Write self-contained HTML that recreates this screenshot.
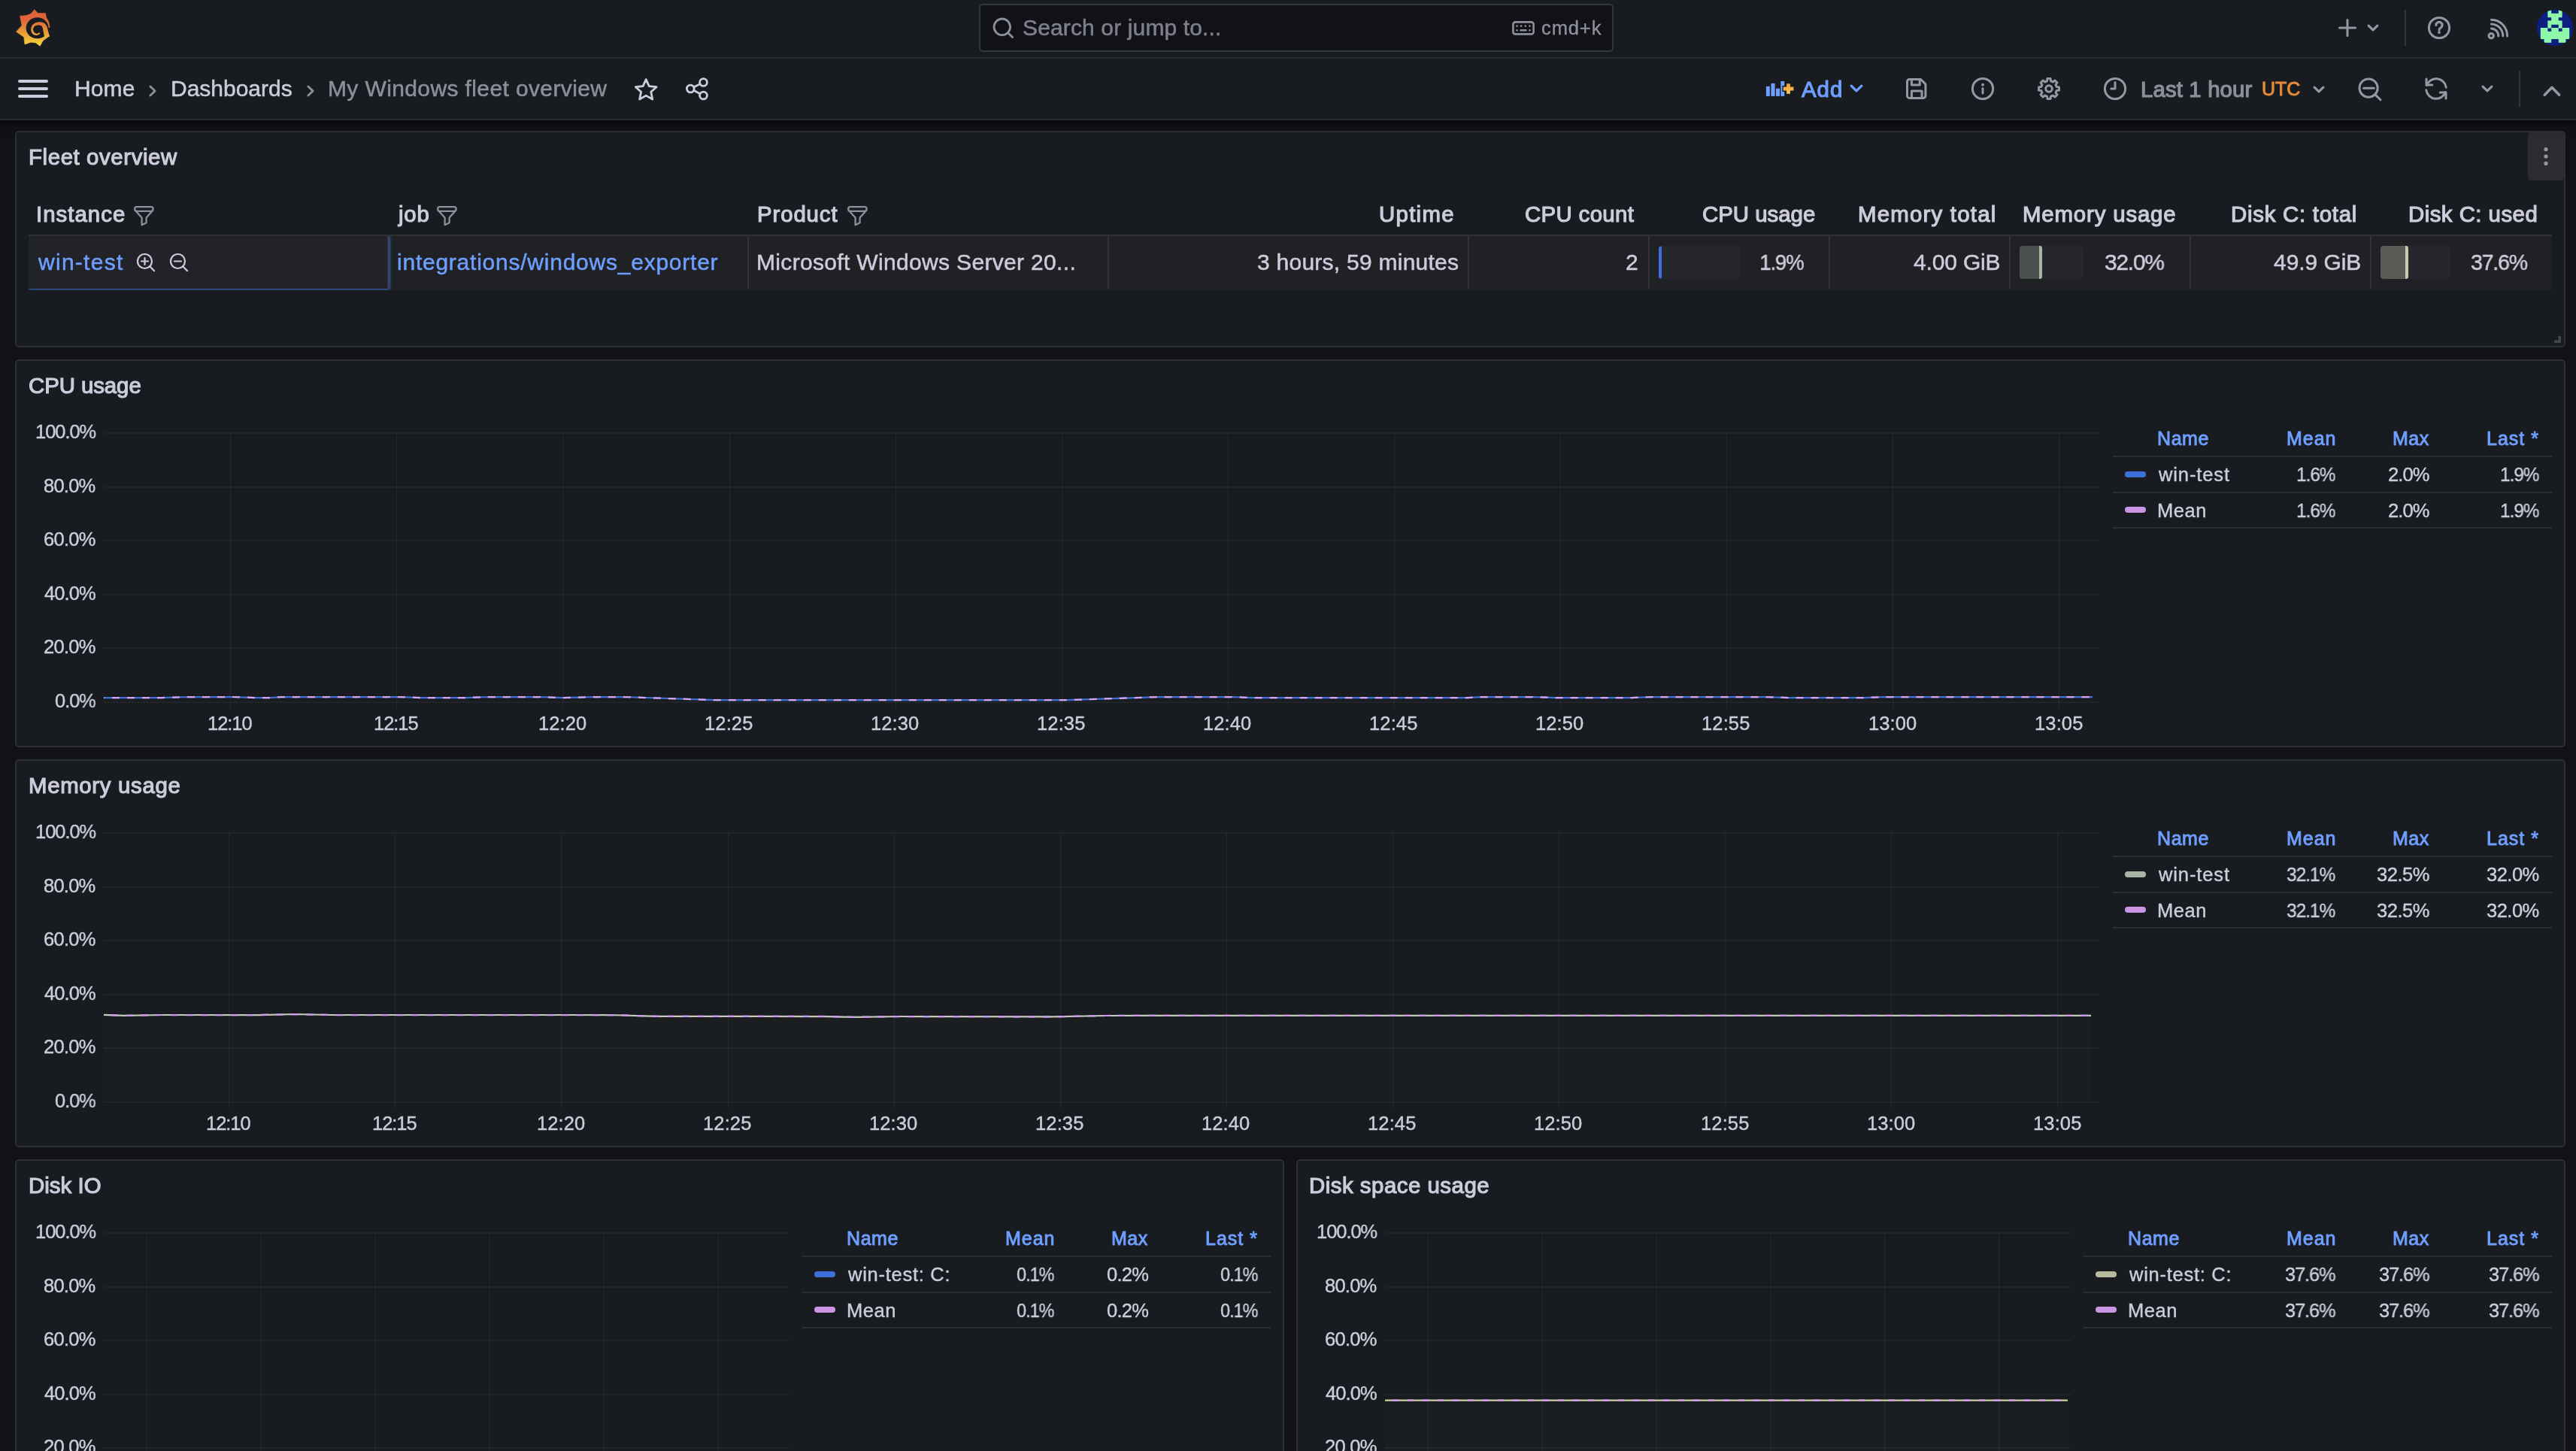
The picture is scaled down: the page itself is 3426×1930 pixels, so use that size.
<!DOCTYPE html>
<html lang="en"><head><meta charset="utf-8"><meta name="viewport" content="width=3426"><title>My Windows fleet overview - Dashboards - Grafana</title>
<style>
*{box-sizing:border-box}
html,body{margin:0;padding:0}
body{width:3426px;height:1930px;overflow:hidden;background:#111217;font-family:"Liberation Sans",sans-serif;color:#ccccdc;position:relative}
.t{position:absolute;white-space:pre;margin:0;font-weight:400;text-decoration:none;display:block}
.t{-webkit-text-stroke:0.5px currentColor;will-change:transform}
.t.m{-webkit-text-stroke:1.15px currentColor}
.t.s{-webkit-text-stroke:0.42px currentColor}
.t.m.s{-webkit-text-stroke:0.9px currentColor}
.ic{position:absolute;display:block;overflow:visible}
.topbar{position:absolute;left:0;top:0;width:3426px;height:78px;background:#181b1f;border-bottom:2px solid #2c2e34;z-index:4}
.toolbar{position:absolute;left:0;top:0;width:3426px;height:160px;background:#181b1f;border-bottom:2px solid #2c2e34;box-shadow:0 1px 13px 1px rgba(0,0,0,0.85);z-index:3}
.search{position:absolute;background:#111217;border:2px solid #34363d;border-radius:5px}
.vdiv{position:absolute;width:2px;background:#34363d}
.canvas{position:absolute;left:0;top:0;width:3426px;height:1930px;z-index:1}
.panel{position:absolute;background:#181b1f;border:2px solid #2d2f35;border-radius:5px}
.panel h2{font-weight:400}
.pmenu{position:absolute;background:#2a2c32;border-radius:4px}
.thead{position:absolute;border-bottom:2px solid #2f3136}
.trow{position:absolute;overflow:hidden;background:#1f2125}
.cell{position:absolute;border-right:2px solid #303237}
.cell.last{border-right:none}
.cell.hov{background:#212328;box-shadow:0 0 4px 0.5px #3d71d9;border-right-color:#36383d;z-index:1}
.z2{z-index:2}
.gtrack{position:absolute;background:#25272c;border-radius:4px;overflow:hidden}
.gfill{position:absolute;left:0;top:0;height:100%}
.gedge{position:absolute;top:0;width:4px;height:100%;border-radius:0 3px 3px 0}
.legend{position:absolute}
.lline{position:absolute;left:0;width:100%;height:2px;background:#2c2e34}
.lmark{position:absolute;width:28px;height:8px;border-radius:4px}
</style></head>
<body>
<header class="topbar">
<svg class="ic" style="left:10.00px;top:5.00px" width="70" height="65" viewBox="0 0 1563 1451" ><defs><linearGradient id="lg" x1="0" y1="180" x2="0" y2="1250" gradientUnits="userSpaceOnUse"><stop offset="0" stop-color="#e05f3a"/><stop offset="0.28" stop-color="#e0663a"/><stop offset="0.62" stop-color="#e89a36"/><stop offset="1" stop-color="#f8d63d"/></linearGradient></defs><path d="M800 172 L903 278 L1130 280 L1152 400 L1224 535 L1252 690 L1200 745 L1186 862 L1246 960 L1058 1092 L965 1256 L835 1160 L690 1146 L512 1206 L484 990 L256 830 L424 640 L366 360 L560 348 L692 296Z" fill="url(#lg)" stroke="url(#lg)" stroke-width="10" stroke-linejoin="round"/><ellipse cx="885" cy="722" rx="335" ry="312" fill="#181b1f"/><path d="M1251 971 L1248 961 L1244 948 L1240 933 L1235 916 L1230 897 L1224 878 L1219 859 L1214 840 L1209 823 L1205 808 L1202 796 L1199 783 L1196 771 L1193 758 L1191 744 L1188 731 L1184 717 L1179 702 L1174 687 L1168 673 L1161 661 L1155 650 L1148 639 L1140 627 L1131 615 L1121 603 L1109 592 L1096 581 L1082 571 L1067 563 L1051 556 L1035 551 L1018 547 L1001 545 L984 543 L967 542 L950 541 L932 542 L915 544 L899 546 L883 550 L866 554 L850 560 L833 566 L817 573 L801 581 L785 590 L771 600 L757 611 L744 624 L733 638 L724 654 L717 670 L711 686 L706 702 L702 719 L700 735 L698 751 L697 766 L697 780 L698 795 L701 809 L705 823 L710 836 L716 848 L722 860 L729 871 L737 881 L744 891 L753 899 L762 907 L773 914 L783 920 L794 925 L805 929 L816 932 L827 934 L838 936 L849 936 L860 936 L871 934 L882 931 L892 926 L902 921 L910 915 L919 910 L926 904 L932 899 L938 895 L942 893 L938 883 L933 884 L926 886 L918 888 L910 890 L901 892 L891 894 L882 895 L874 895 L867 895 L860 894 L854 892 L846 890 L838 888 L830 885 L822 882 L815 879 L808 875 L801 870 L796 866 L791 861 L786 855 L781 848 L777 840 L772 832 L768 824 L764 815 L762 806 L760 797 L759 788 L759 780 L760 770 L762 759 L764 747 L768 735 L772 722 L776 711 L782 700 L788 690 L794 682 L800 676 L807 671 L815 665 L825 660 L836 655 L849 650 L861 646 L874 643 L887 640 L900 639 L911 638 L922 637 L934 638 L946 639 L957 641 L969 643 L981 646 L991 650 L1000 653 L1008 657 L1013 661 L1017 665 L1020 669 L1023 673 L1025 678 L1028 684 L1031 691 L1034 699 L1038 708 L1041 717 L1044 727 L1047 734 L1049 742 L1051 750 L1052 760 L1054 771 L1056 783 L1058 796 L1061 811 L1064 826 L1067 842 L1071 858 L1075 876 L1079 895 L1083 914 L1088 933 L1092 952 L1096 970 L1100 985 L1103 999 L1105 1009Z" fill="url(#lg)"/><circle cx="908" cy="772" r="138" fill="#181b1f"/><path d="M745 790 C 750 870, 820 925, 900 900 C 925 892, 940 885, 945 878" fill="none" stroke="url(#lg)" stroke-width="42" stroke-linecap="round"/></svg>
<div class="search" style="left:1302px;top:5px;width:844px;height:64px">
<svg class="ic" style="left:14.00px;top:14.00px" width="32.6" height="32.6" viewBox="0 0 32.6 32.6" ><g fill="none" stroke="#8e8f9c" stroke-width="2.8" stroke-linecap="round" stroke-linejoin="round"><circle cx="14.80" cy="14.80" r="10.80"/><path d="M22.44 22.44 L28.60 28.60"/></g></svg>
<span id="t0" class="t" style="left:55.84px;top:15.10px;font-size:30px;line-height:30px;letter-spacing:0.137px;color:#7f808d">Search or jump to...</span>
<svg class="ic" style="left:707.00px;top:20.60px" width="30" height="18.8" viewBox="0 0 30 18.8" ><g fill="none" stroke="#8e8f9c" stroke-width="2.6" stroke-linecap="round" stroke-linejoin="round"><rect x="1.4" y="1.4" width="27.2" height="16" rx="3"/></g><g fill="#8e8f9c"><circle cx="6.5" cy="6.6" r="1.3"/><circle cx="12.1" cy="6.6" r="1.3"/><circle cx="17.8" cy="6.6" r="1.3"/><circle cx="23.4" cy="6.6" r="1.3"/><circle cx="6.5" cy="12.2" r="1.3"/><rect x="10.3" y="10.9" width="9.4" height="2.6" rx="1.3"/><circle cx="23.4" cy="12.2" r="1.3"/></g></svg>
<span id="t1" class="t s" style="left:746.12px;top:17.00px;font-size:25.5px;line-height:26px;letter-spacing:0.895px;color:#8e8f9c">cmd+k</span>
</div>
<svg class="ic" style="left:3108.00px;top:23.00px" width="28" height="28" viewBox="0 0 28 28" ><path fill="none" stroke="#9697a5" stroke-width="3" stroke-linecap="round" stroke-linejoin="round" d="M14 3.5 V24.5 M3.5 14 H24.5"/></svg>
<svg class="ic" style="left:3146.00px;top:30.00px" width="20" height="14" viewBox="0 0 20 14" ><path fill="none" stroke="#9697a5" stroke-width="3.2" stroke-linecap="round" stroke-linejoin="round" d="M4.1 4.1 L10 9.9 L15.9 4.1"/></svg>
<div class="vdiv" style="left:3198px;top:13px;height:48px"></div>
<svg class="ic" style="left:3224.00px;top:17.00px" width="40" height="40" viewBox="0 0 40 40" ><circle fill="none" stroke="#9697a5" stroke-width="3" stroke-linecap="round" stroke-linejoin="round" cx="20" cy="20" r="13.6"/><path fill="none" stroke="#9697a5" stroke-width="3.1" stroke-linecap="round" stroke-linejoin="round" d="M15.9 16.4 a4.1 4.1 0 1 1 6.2 3.5 c-1.5 0.9 -2.1 1.6 -2.1 3.1"/><circle cx="20" cy="26.1" r="1.9" fill="#9697a5"/></svg>
<svg class="ic" style="left:3305.00px;top:20.00px" width="36" height="36" viewBox="0 0 36 36" ><g fill="none" stroke="#9697a5" stroke-width="3" stroke-linecap="round" stroke-linejoin="round"><circle cx="8.20" cy="27.60" r="3.2"/><path d="M8.50 18.00 A9.60 9.60 0 0 1 17.80 27.90"/><path d="M8.50 12.00 A15.60 15.60 0 0 1 23.80 27.90"/><path d="M8.50 6.20 A21.40 21.40 0 0 1 29.60 27.90"/></g></svg>
<svg class="ic" style="left:3374.00px;top:12.80px" width="48" height="48" viewBox="0 0 48 48" ><defs><clipPath id="avc"><circle cx="24" cy="24" r="24"/></clipPath></defs><g clip-path="url(#avc)"><rect width="48" height="48" fill="#0d1f80"/><g fill="#8ef7a9"><rect x="14.40" y="0.00" width="4.80" height="5.40"/><rect x="28.80" y="0.00" width="4.80" height="5.40"/><rect x="14.40" y="4.80" width="19.20" height="5.40"/><rect x="19.20" y="9.60" width="9.60" height="5.40"/><rect x="14.40" y="14.40" width="19.20" height="5.40"/><rect x="14.40" y="19.20" width="4.80" height="5.40"/><rect x="28.80" y="19.20" width="4.80" height="5.40"/><rect x="4.80" y="24.00" width="9.60" height="5.40"/><rect x="19.20" y="24.00" width="9.60" height="5.40"/><rect x="33.60" y="24.00" width="9.60" height="5.40"/><rect x="4.80" y="28.80" width="38.40" height="5.40"/><rect x="4.80" y="33.60" width="38.40" height="5.40"/><rect x="9.60" y="38.40" width="9.60" height="5.40"/><rect x="28.80" y="38.40" width="9.60" height="5.40"/></g></g></svg>
</header>
<nav class="toolbar">
<svg class="ic" style="left:24.00px;top:106.00px" width="40" height="24" viewBox="0 0 40 24" ><g fill="#ccccdc"><rect x="0" y="0" width="40" height="4" rx="2"/><rect x="0" y="10" width="40" height="4" rx="2"/><rect x="0" y="20" width="40" height="4" rx="2"/></g></svg>
<a id="t2" class="t" style="left:98.74px;top:103.10px;font-size:30px;line-height:30px;letter-spacing:0.122px;color:#ccccdc">Home</a>
<svg class="ic" style="left:196.00px;top:111.00px" width="14" height="20" viewBox="0 0 14 20" ><path fill="none" stroke="#8e8f9c" stroke-width="2.8" stroke-linecap="round" stroke-linejoin="round" d="M3.9 3.9 L10.1 10 L3.9 16.1"/></svg>
<a id="t3" class="t" style="left:226.74px;top:103.10px;font-size:30px;line-height:30px;letter-spacing:-0.014px;color:#ccccdc">Dashboards</a>
<svg class="ic" style="left:406.00px;top:111.00px" width="14" height="20" viewBox="0 0 14 20" ><path fill="none" stroke="#8e8f9c" stroke-width="2.8" stroke-linecap="round" stroke-linejoin="round" d="M3.9 3.9 L10.1 10 L3.9 16.1"/></svg>
<a id="t4" class="t" style="left:435.74px;top:103.10px;font-size:30px;line-height:30px;letter-spacing:0.383px;color:#8e8f9c">My Windows fleet overview</a>
<svg class="ic" style="left:839.00px;top:99.00px" width="40" height="40" viewBox="0 0 40 40" ><path fill="none" stroke="#ccccdc" stroke-width="2.8" stroke-linecap="round" stroke-linejoin="round" d="M20.20 6.60 L24.26 15.62 L34.09 16.69 L26.76 23.33 L28.78 33.01 L20.20 28.10 L11.62 33.01 L13.64 23.33 L6.31 16.69 L16.14 15.62Z"/></svg>
<svg class="ic" style="left:907.00px;top:98.00px" width="40" height="40" viewBox="0 0 40 40" ><g fill="none" stroke="#ccccdc" stroke-width="2.8" stroke-linecap="round" stroke-linejoin="round"><circle cx="28.5" cy="11.5" r="4.9"/><circle cx="11.3" cy="20" r="4.9"/><circle cx="28.5" cy="29" r="4.9"/><path d="M15.7 17.8 L24.1 13.7 M15.7 22.2 L24.1 26.8"/></g></svg>
<svg class="ic" style="left:2348.00px;top:108.00px" width="40" height="21" viewBox="0 0 40 21" ><g fill="#6e9fff"><rect x="0.9" y="6.8" width="4.9" height="13.1"/><rect x="7.4" y="2.9" width="5.2" height="17"/><rect x="14" y="9.7" width="5" height="10.2"/><rect x="20.3" y="0" width="4.9" height="19.9"/></g><path d="M30.5 1.8 V18 M22.4 10 H38.6" stroke="#181b1f" stroke-width="8.2" fill="none"/><defs><linearGradient id="pg" x1="0" y1="0" x2="0" y2="1"><stop offset="0" stop-color="#f39b3c"/><stop offset="1" stop-color="#fbca4e"/></linearGradient></defs><path d="M28.1 3.2 h4.8 v4.4 h4.5 v4.8 h-4.5 v4.4 h-4.8 v-4.4 h-4.4 v-4.8 h4.4 z" fill="url(#pg)"/></svg>
<span id="t5" class="t m" style="left:2396.44px;top:103.50px;font-size:29.4px;line-height:29px;letter-spacing:0.969px;color:#6e9fff">Add</span>
<svg class="ic" style="left:2458.00px;top:110.00px" width="22" height="15" viewBox="0 0 22 15" ><path fill="none" stroke="#6e9fff" stroke-width="3.3" stroke-linecap="round" stroke-linejoin="round" d="M4.15 4.15 L11 10.85 L17.85 4.15"/></svg>
<svg class="ic" style="left:2535.00px;top:104.00px" width="28" height="28" viewBox="0 0 28 28" ><g fill="none" stroke="#9697a5" stroke-width="3" stroke-linecap="round" stroke-linejoin="round"><path d="M4.5 1.5 H19.5 L25.9 7.9 V23.4 a3 3 0 0 1 -3 3 H4.5 a3 3 0 0 1 -3 -3 V4.5 a3 3 0 0 1 3 -3 Z"/><path d="M7.4 1.6 V8.9 H18.2 V1.6"/><path d="M7.4 26.3 V17.1 H21 V26.3"/></g></svg>
<svg class="ic" style="left:2617.00px;top:98.00px" width="40" height="40" viewBox="0 0 40 40" ><circle fill="none" stroke="#9697a5" stroke-width="3" stroke-linecap="round" stroke-linejoin="round" cx="20" cy="20" r="13.6"/><circle cx="20" cy="14.8" r="2" fill="#9697a5"/><path fill="none" stroke="#9697a5" stroke-width="3" stroke-linecap="round" stroke-linejoin="round" d="M20 19.6 V26"/></svg>
<svg class="ic" style="left:2705.00px;top:98.00px" width="40" height="40" viewBox="0 0 40 40" ><path fill="none" stroke="#9697a5" stroke-width="3" stroke-linecap="round" stroke-linejoin="round" d="M17.87 6.57 L22.13 6.57 L22.53 9.81 L25.42 11.00 L27.99 9.00 L31.00 12.01 L29.00 14.58 L30.19 17.47 L33.43 17.87 L33.43 22.13 L30.19 22.53 L29.00 25.42 L31.00 27.99 L27.99 31.00 L25.42 29.00 L22.53 30.19 L22.13 33.43 L17.87 33.43 L17.47 30.19 L14.58 29.00 L12.01 31.00 L9.00 27.99 L11.00 25.42 L9.81 22.53 L6.57 22.13 L6.57 17.87 L9.81 17.47 L11.00 14.58 L9.00 12.01 L12.01 9.00 L14.58 11.00 L17.47 9.81Z"/><circle fill="none" stroke="#9697a5" stroke-width="3" stroke-linecap="round" stroke-linejoin="round" cx="20" cy="20" r="4.3"/></svg>
<svg class="ic" style="left:2793.00px;top:98.00px" width="40" height="40" viewBox="0 0 40 40" ><circle fill="none" stroke="#9697a5" stroke-width="3" stroke-linecap="round" stroke-linejoin="round" cx="20" cy="20" r="13.6"/><path fill="none" stroke="#9697a5" stroke-width="3" stroke-linecap="round" stroke-linejoin="round" d="M20 11.6 V20 H14.8"/></svg>
<span id="t6" class="t m" style="left:2847.09px;top:103.50px;font-size:29.4px;line-height:29px;letter-spacing:0.129px;color:#8e8f9c">Last 1 hour</span>
<span id="t7" class="t m s" style="left:3008.07px;top:105.60px;font-size:25px;line-height:25px;letter-spacing:0.000px;color:#e58b38">UTC</span>
<svg class="ic" style="left:3074.00px;top:111.50px" width="20" height="14" viewBox="0 0 20 14" ><path fill="none" stroke="#9697a5" stroke-width="3.2" stroke-linecap="round" stroke-linejoin="round" d="M4.1 4.1 L10 9.9 L15.9 4.1"/></svg>
<svg class="ic" style="left:3134.30px;top:100.50px" width="36" height="35.8" viewBox="0 0 36 35.8" ><g fill="none" stroke="#9697a5" stroke-width="3" stroke-linecap="round" stroke-linejoin="round"><circle cx="16.10" cy="16.10" r="12.10"/><path d="M24.71 24.60 L32.00 31.80"/><path d="M9.60 16.30 H23.30"/></g></svg>
<svg class="ic" style="left:3224.00px;top:103.00px" width="32" height="30" viewBox="0 0 32 30" ><g fill="none" stroke="#9697a5" stroke-width="3" stroke-linecap="round" stroke-linejoin="round"><path d="M3.5 10.45 A13.3 13.3 0 0 1 29.17 13.15"/><path d="M3 2 V9.9 H10.8"/><path d="M28.5 19.55 A13.3 13.3 0 0 1 2.83 16.85"/><path d="M29 28 V20.1 H21.2"/></g></svg>
<svg class="ic" style="left:3298.00px;top:111.00px" width="20" height="14" viewBox="0 0 20 14" ><path fill="none" stroke="#9697a5" stroke-width="3.2" stroke-linecap="round" stroke-linejoin="round" d="M4.1 4.1 L10 9.9 L15.9 4.1"/></svg>
<div class="vdiv" style="left:3350px;top:94px;height:48px"></div>
<svg class="ic" style="left:3380.00px;top:112.00px" width="28" height="18.5" viewBox="0 0 28 18.5" ><path fill="none" stroke="#9697a5" stroke-width="3.6" stroke-linecap="round" stroke-linejoin="round" d="M4.3 14.2 L14 4.3 L23.7 14.2"/></svg>
</nav>
<main class="canvas">
<section class="panel" id="p1" style="left:20px;top:174px;width:3392px;height:288px"><h2 id="t8" class="t m" style="left:16.09px;top:17.50px;font-size:29.4px;line-height:29px;letter-spacing:0.600px;color:#ccccdc">Fleet overview</h2>
<div class="pmenu" style="left:3340px;top:0px;width:48px;height:64px">
<svg class="ic" style="left:18px;top:19px" width="12" height="26" viewBox="0 0 12 26"><g fill="#9697a5"><circle cx="6" cy="3.6" r="2.6"/><circle cx="6" cy="13" r="2.6"/><circle cx="6" cy="22.4" r="2.6"/></g></svg>
</div>
<div class="thead" style="left:16px;top:64px;width:3356px;height:74px">
<span id="t9" class="t m" style="left:10.29px;top:29.50px;font-size:29.4px;line-height:29px;letter-spacing:1.018px;color:#ccccdc">Instance</span>
<svg class="ic" style="left:139.50px;top:33.60px" width="27" height="27" viewBox="0 0 27 27" ><g fill="none" stroke="#8e8f9c" stroke-width="2.3" stroke-linecap="round" stroke-linejoin="round"><rect x="1.2" y="1.2" width="24.4" height="5.6" rx="2.6"/><path d="M2.6 6.8 L10.6 15.6 V25.2 L16.6 22.2 V15.6 L24.4 6.8"/></g></svg>
<span id="t10" class="t m" style="left:491.97px;top:29.50px;font-size:29.4px;line-height:29px;letter-spacing:0.766px;color:#ccccdc">job</span>
<svg class="ic" style="left:543.00px;top:33.60px" width="27" height="27" viewBox="0 0 27 27" ><g fill="none" stroke="#8e8f9c" stroke-width="2.3" stroke-linecap="round" stroke-linejoin="round"><rect x="1.2" y="1.2" width="24.4" height="5.6" rx="2.6"/><path d="M2.6 6.8 L10.6 15.6 V25.2 L16.6 22.2 V15.6 L24.4 6.8"/></g></svg>
<span id="t11" class="t m" style="left:968.84px;top:29.50px;font-size:29.4px;line-height:29px;letter-spacing:0.884px;color:#ccccdc">Product</span>
<svg class="ic" style="left:1088.50px;top:33.60px" width="27" height="27" viewBox="0 0 27 27" ><g fill="none" stroke="#8e8f9c" stroke-width="2.3" stroke-linecap="round" stroke-linejoin="round"><rect x="1.2" y="1.2" width="24.4" height="5.6" rx="2.6"/><path d="M2.6 6.8 L10.6 15.6 V25.2 L16.6 22.2 V15.6 L24.4 6.8"/></g></svg>
<span id="t12" class="t m" style="left:1796.23px;top:29.50px;font-size:29.4px;line-height:29px;letter-spacing:1.290px;color:#ccccdc">Uptime</span>
<span id="t13" class="t m" style="left:1989.76px;top:29.50px;font-size:29.4px;line-height:29px;letter-spacing:0.349px;color:#ccccdc">CPU count</span>
<span id="t14" class="t m" style="left:2225.51px;top:29.50px;font-size:29.4px;line-height:29px;letter-spacing:-0.006px;color:#ccccdc">CPU usage</span>
<span id="t15" class="t m" style="left:2433.09px;top:29.50px;font-size:29.4px;line-height:29px;letter-spacing:1.224px;color:#ccccdc">Memory total</span>
<span id="t16" class="t m" style="left:2652.09px;top:29.50px;font-size:29.4px;line-height:29px;letter-spacing:0.843px;color:#ccccdc">Memory usage</span>
<span id="t17" class="t m" style="left:2929.09px;top:29.50px;font-size:29.4px;line-height:29px;letter-spacing:0.742px;color:#ccccdc">Disk C: total</span>
<span id="t18" class="t m" style="left:3164.59px;top:29.50px;font-size:29.4px;line-height:29px;letter-spacing:0.468px;color:#ccccdc">Disk C: used</span>
</div>
<div class="trow" style="left:16px;top:138px;width:3356px;height:72px">
<div class="cell hov" style="left:0.00px;top:0;width:479.00px;height:70px"></div>
<div class="cell" style="left:479.00px;top:0;width:479.00px;height:70px"></div>
<div class="cell" style="left:958.00px;top:0;width:479.00px;height:70px"></div>
<div class="cell" style="left:1437.00px;top:0;width:479.00px;height:70px"></div>
<div class="cell" style="left:1916.00px;top:0;width:240.00px;height:70px"></div>
<div class="cell" style="left:2156.00px;top:0;width:240.00px;height:70px"></div>
<div class="cell" style="left:2396.00px;top:0;width:240.00px;height:70px"></div>
<div class="cell" style="left:2636.00px;top:0;width:240.00px;height:70px"></div>
<div class="cell" style="left:2876.00px;top:0;width:240.00px;height:70px"></div>
<div class="cell last" style="left:3116.00px;top:0;width:240.00px;height:70px"></div>
<a id="t19" class="t z2" style="left:12.74px;top:20.10px;font-size:30px;line-height:30px;letter-spacing:1.273px;color:#6e9fff">win-test</a>
<svg class="ic z2" style="left:140.50px;top:19.90px" width="30.1" height="30.3" viewBox="0 0 30.1 30.3" ><g fill="none" stroke="#ccccdc" stroke-width="2.2" stroke-linecap="round" stroke-linejoin="round"><circle cx="13.50" cy="13.50" r="9.50"/><path d="M20.16 20.27 L26.10 26.30"/><path d="M9.00 13.50 H18.00"/><path d="M13.50 9.00 V18.00"/></g></svg>
<svg class="ic z2" style="left:184.50px;top:19.90px" width="30.1" height="30.3" viewBox="0 0 30.1 30.3" ><g fill="none" stroke="#ccccdc" stroke-width="2.2" stroke-linecap="round" stroke-linejoin="round"><circle cx="13.50" cy="13.50" r="9.50"/><path d="M20.16 20.27 L26.10 26.30"/><path d="M9.00 13.50 H18.00"/></g></svg>
<a id="t20" class="t" style="left:489.69px;top:20.10px;font-size:30px;line-height:30px;letter-spacing:0.763px;color:#6e9fff">integrations/windows_exporter</a>
<span id="t21" class="t" style="left:968.49px;top:20.10px;font-size:30px;line-height:30px;letter-spacing:0.333px;color:#ccccdc">Microsoft Windows Server 20...</span>
<span id="t22" class="t" style="left:1633.56px;top:20.10px;font-size:30px;line-height:30px;letter-spacing:0.254px;color:#ccccdc">3 hours, 59 minutes</span>
<span id="t23" class="t" style="left:2124.44px;top:20.10px;font-size:30px;line-height:30px;letter-spacing:0.000px;color:#ccccdc">2</span>
<span id="t24" class="t" style="left:2301.91px;top:20.10px;font-size:30px;line-height:30px;letter-spacing:-1.250px;color:#ccccdc;transform:scaleX(0.9196);transform-origin:2.29px 50%">1.9%</span>
<span id="t25" class="t" style="left:2506.51px;top:20.10px;font-size:30px;line-height:30px;letter-spacing:-0.160px;color:#ccccdc">4.00 GiB</span>
<span id="t26" class="t" style="left:2761.06px;top:20.10px;font-size:30px;line-height:30px;letter-spacing:-1.250px;color:#ccccdc;transform:scaleX(0.9967);transform-origin:1.14px 50%">32.0%</span>
<span id="t27" class="t" style="left:2986.01px;top:20.10px;font-size:30px;line-height:30px;letter-spacing:-0.053px;color:#ccccdc">49.9 GiB</span>
<span id="t28" class="t" style="left:3247.56px;top:20.10px;font-size:30px;line-height:30px;letter-spacing:-1.250px;color:#ccccdc;transform:scaleX(0.9485);transform-origin:1.14px 50%">37.6%</span>
<div class="gtrack" style="left:2168.00px;top:13.00px;width:108.00px;height:44px"><div class="gedge" style="left:0.00px;background:#3d71d9"></div></div>
<div class="gtrack" style="left:2648.00px;top:13.00px;width:85.00px;height:44px"><div class="gfill" style="width:27.00px;background:#4c5150"></div><div class="gedge" style="left:26.00px;background:#a9b5a7"></div></div>
<div class="gtrack" style="left:3128.00px;top:13.00px;width:93.00px;height:44px"><div class="gfill" style="width:34.00px;background:#595b55"></div><div class="gedge" style="left:33.00px;background:#c6cbac"></div></div>
</div>
<svg class="ic" style="left:3374.0px;top:269.5px" width="12" height="12" viewBox="0 0 12 12"><path d="M8.3 1 V8.3 H1" fill="none" stroke="#45474e" stroke-width="3.4"/></svg>
</section>
<section class="panel" id="p2" style="left:20px;top:478px;width:3392px;height:516px"><h2 id="t29" class="t m" style="left:16.01px;top:17.50px;font-size:29.4px;line-height:29px;letter-spacing:-0.069px;color:#ccccdc">CPU usage</h2>
<span id="t30" class="t s ax" style="left:24.66px;top:81.15px;font-size:25.5px;line-height:26px;letter-spacing:-1.050px;color:#ccccdc;transform:scaleX(0.9977);transform-origin:1.94px 50%">100.0%</span>
<span id="t31" class="t s ax" style="left:36.49px;top:152.65px;font-size:25.5px;line-height:26px;letter-spacing:-0.771px;color:#ccccdc">80.0%</span>
<span id="t32" class="t s ax" style="left:36.31px;top:224.15px;font-size:25.5px;line-height:26px;letter-spacing:-0.725px;color:#ccccdc">60.0%</span>
<span id="t33" class="t s ax" style="left:37.01px;top:295.65px;font-size:25.5px;line-height:26px;letter-spacing:-0.902px;color:#ccccdc">40.0%</span>
<span id="t34" class="t s ax" style="left:36.32px;top:367.15px;font-size:25.5px;line-height:26px;letter-spacing:-0.728px;color:#ccccdc">20.0%</span>
<span id="t35" class="t s ax" style="left:51.00px;top:438.65px;font-size:25.5px;line-height:26px;letter-spacing:-1.050px;color:#ccccdc;transform:scaleX(0.9950);transform-origin:1.00px 50%">0.0%</span>
<svg class="ic plot" style="left:114.00px;top:92.00px" width="2661.0" height="376.0" viewBox="0 0 2661.0 376.0"><g stroke="rgba(226,232,240,0.042)" stroke-width="2" fill="none"><path d="M2.0 4.00 H2656.5"/><path d="M2.0 76.00 H2656.5"/><path d="M2.0 147.00 H2656.5"/><path d="M2.0 219.00 H2656.5"/><path d="M2.0 290.00 H2656.5"/><path d="M2.0 362.00 H2656.5"/></g><g stroke="rgba(226,232,240,0.068)" stroke-width="1" fill="none" shape-rendering="crispEdges"><path d="M170.5 4.2 V370.2"/><path d="M391.5 4.2 V370.2"/><path d="M612.5 4.2 V370.2"/><path d="M834.5 4.2 V370.2"/><path d="M1055.5 4.2 V370.2"/><path d="M1276.5 4.2 V370.2"/><path d="M1497.5 4.2 V370.2"/><path d="M1718.5 4.2 V370.2"/><path d="M1939.5 4.2 V370.2"/><path d="M2160.5 4.2 V370.2"/><path d="M2381.5 4.2 V370.2"/><path d="M2602.5 4.2 V370.2"/></g><path d="M2.0 356.1 L79.0 356.1 L113.0 355.0 L173.0 355.0 L204.0 356.1 L222.0 356.1 L242.0 355.0 L396.0 355.0 L424.0 356.1 L483.0 356.1 L514.0 355.0 L581.0 355.0 L612.0 356.1 L658.0 355.0 L694.0 355.0 L815.0 359.2 L1283.0 359.2 L1405.0 355.0 L1503.0 355.0 L1528.0 356.1 L1816.0 356.1 L1834.0 355.0 L1904.0 355.0 L1932.0 356.1 L2034.0 356.1 L2061.0 355.0 L2209.0 355.0 L2244.0 356.1 L2344.0 356.1 L2369.0 355.0 L2647.0 355.0" fill="none" stroke="#3d71d9" stroke-width="2.25" stroke-linejoin="round"/><path d="M2.0 356.1 L79.0 356.1 L113.0 355.0 L173.0 355.0 L204.0 356.1 L222.0 356.1 L242.0 355.0 L396.0 355.0 L424.0 356.1 L483.0 356.1 L514.0 355.0 L581.0 355.0 L612.0 356.1 L658.0 355.0 L694.0 355.0 L815.0 359.2 L1283.0 359.2 L1405.0 355.0 L1503.0 355.0 L1528.0 356.1 L1816.0 356.1 L1834.0 355.0 L1904.0 355.0 L1932.0 356.1 L2034.0 356.1 L2061.0 355.0 L2209.0 355.0 L2244.0 356.1 L2344.0 356.1 L2369.0 355.0 L2647.0 355.0" fill="none" stroke="#dca4ec" stroke-width="2.25" stroke-dasharray="10 10" stroke-dashoffset="9" stroke-linejoin="round"/></svg>
<span id="t36" class="t s ax" style="left:254.01px;top:469.25px;font-size:25.5px;line-height:26px;letter-spacing:-1.050px;color:#ccccdc;transform:scaleX(0.9987);transform-origin:1.94px 50%">12:10</span>
<span id="t37" class="t s ax" style="left:475.10px;top:469.25px;font-size:25.5px;line-height:26px;letter-spacing:-1.049px;color:#ccccdc">12:15</span>
<span id="t38" class="t s ax" style="left:693.81px;top:469.25px;font-size:25.5px;line-height:26px;letter-spacing:0.119px;color:#ccccdc">12:20</span>
<span id="t39" class="t s ax" style="left:914.90px;top:469.25px;font-size:25.5px;line-height:26px;letter-spacing:0.138px;color:#ccccdc">12:25</span>
<span id="t40" class="t s ax" style="left:1135.99px;top:469.25px;font-size:25.5px;line-height:26px;letter-spacing:0.119px;color:#ccccdc">12:30</span>
<span id="t41" class="t s ax" style="left:1357.08px;top:469.25px;font-size:25.5px;line-height:26px;letter-spacing:0.138px;color:#ccccdc">12:35</span>
<span id="t42" class="t s ax" style="left:1578.17px;top:469.25px;font-size:25.5px;line-height:26px;letter-spacing:0.119px;color:#ccccdc">12:40</span>
<span id="t43" class="t s ax" style="left:1799.26px;top:469.25px;font-size:25.5px;line-height:26px;letter-spacing:0.138px;color:#ccccdc">12:45</span>
<span id="t44" class="t s ax" style="left:2020.35px;top:469.25px;font-size:25.5px;line-height:26px;letter-spacing:0.119px;color:#ccccdc">12:50</span>
<span id="t45" class="t s ax" style="left:2241.44px;top:469.25px;font-size:25.5px;line-height:26px;letter-spacing:0.138px;color:#ccccdc">12:55</span>
<span id="t46" class="t s ax" style="left:2462.53px;top:469.25px;font-size:25.5px;line-height:26px;letter-spacing:0.119px;color:#ccccdc">13:00</span>
<span id="t47" class="t s ax" style="left:2683.62px;top:469.25px;font-size:25.5px;line-height:26px;letter-spacing:0.138px;color:#ccccdc">13:05</span>
<div class="legend" style="left:2788.00px;top:80.00px;width:584.00px;height:150px">
<span id="t48" class="t m s" style="left:59.20px;top:10.60px;font-size:25px;line-height:25px;letter-spacing:0.574px;color:#6e9fff">Name</span>
<span id="t49" class="t m s" style="left:231.45px;top:10.60px;font-size:25px;line-height:25px;letter-spacing:0.962px;color:#6e9fff">Mean</span>
<span id="t50" class="t m s" style="left:372.45px;top:10.60px;font-size:25px;line-height:25px;letter-spacing:0.544px;color:#6e9fff">Max</span>
<span id="t51" class="t m s" style="left:497.45px;top:10.60px;font-size:25px;line-height:25px;letter-spacing:1.003px;color:#6e9fff">Last *</span>
<div class="lline" style="top:46.0px"></div>
<div class="lline" style="top:93.5px"></div>
<div class="lline" style="top:141.0px"></div>
<div class="lmark" style="left:15.75px;top:67.00px;background:#3d71d9"></div>
<span id="t52" class="t s" style="left:60.99px;top:58.00px;font-size:25.5px;line-height:26px;letter-spacing:0.878px;color:#ccccdc">win-test</span>
<span id="t53" class="t s" style="left:244.01px;top:58.00px;font-size:25.5px;line-height:26px;letter-spacing:-1.050px;color:#ccccdc;transform:scaleX(0.9517);transform-origin:1.94px 50%">1.6%</span>
<span id="t54" class="t s" style="left:366.07px;top:58.00px;font-size:25.5px;line-height:26px;letter-spacing:-0.860px;color:#ccccdc">2.0%</span>
<span id="t55" class="t s" style="left:514.76px;top:58.00px;font-size:25.5px;line-height:26px;letter-spacing:-1.050px;color:#ccccdc;transform:scaleX(0.9517);transform-origin:1.94px 50%">1.9%</span>
<div class="lmark" style="left:15.75px;top:114.00px;background:#ca95e5"></div>
<span id="t56" class="t s" style="left:58.86px;top:105.50px;font-size:25.5px;line-height:26px;letter-spacing:0.520px;color:#ccccdc">Mean</span>
<span id="t57" class="t s" style="left:244.01px;top:105.50px;font-size:25.5px;line-height:26px;letter-spacing:-1.050px;color:#ccccdc;transform:scaleX(0.9517);transform-origin:1.94px 50%">1.6%</span>
<span id="t58" class="t s" style="left:366.07px;top:105.50px;font-size:25.5px;line-height:26px;letter-spacing:-0.860px;color:#ccccdc">2.0%</span>
<span id="t59" class="t s" style="left:514.76px;top:105.50px;font-size:25.5px;line-height:26px;letter-spacing:-1.050px;color:#ccccdc;transform:scaleX(0.9517);transform-origin:1.94px 50%">1.9%</span>
</div>
</section>
<section class="panel" id="p3" style="left:20px;top:1010px;width:3392px;height:516px"><h2 id="t60" class="t m" style="left:15.89px;top:17.50px;font-size:29.4px;line-height:29px;letter-spacing:0.679px;color:#ccccdc">Memory usage</h2>
<span id="t61" class="t s ax" style="left:24.66px;top:81.15px;font-size:25.5px;line-height:26px;letter-spacing:-1.050px;color:#ccccdc;transform:scaleX(0.9977);transform-origin:1.94px 50%">100.0%</span>
<span id="t62" class="t s ax" style="left:36.49px;top:152.65px;font-size:25.5px;line-height:26px;letter-spacing:-0.771px;color:#ccccdc">80.0%</span>
<span id="t63" class="t s ax" style="left:36.31px;top:224.15px;font-size:25.5px;line-height:26px;letter-spacing:-0.725px;color:#ccccdc">60.0%</span>
<span id="t64" class="t s ax" style="left:37.01px;top:295.65px;font-size:25.5px;line-height:26px;letter-spacing:-0.902px;color:#ccccdc">40.0%</span>
<span id="t65" class="t s ax" style="left:36.32px;top:367.15px;font-size:25.5px;line-height:26px;letter-spacing:-0.728px;color:#ccccdc">20.0%</span>
<span id="t66" class="t s ax" style="left:51.00px;top:438.65px;font-size:25.5px;line-height:26px;letter-spacing:-1.050px;color:#ccccdc;transform:scaleX(0.9950);transform-origin:1.00px 50%">0.0%</span>
<svg class="ic plot" style="left:114.00px;top:92.00px" width="2661.0" height="376.0" viewBox="0 0 2661.0 376.0"><g stroke="rgba(226,232,240,0.042)" stroke-width="2" fill="none"><path d="M2.0 4.00 H2656.5"/><path d="M2.0 76.00 H2656.5"/><path d="M2.0 147.00 H2656.5"/><path d="M2.0 219.00 H2656.5"/><path d="M2.0 290.00 H2656.5"/><path d="M2.0 362.00 H2656.5"/></g><g stroke="rgba(226,232,240,0.068)" stroke-width="1" fill="none" shape-rendering="crispEdges"><path d="M168.5 4.2 V370.2"/><path d="M389.5 4.2 V370.2"/><path d="M610.5 4.2 V370.2"/><path d="M832.5 4.2 V370.2"/><path d="M1053.5 4.2 V370.2"/><path d="M1274.5 4.2 V370.2"/><path d="M1495.5 4.2 V370.2"/><path d="M1716.5 4.2 V370.2"/><path d="M1937.5 4.2 V370.2"/><path d="M2158.5 4.2 V370.2"/><path d="M2379.5 4.2 V370.2"/><path d="M2600.5 4.2 V370.2"/></g><path d="M2.0 245.8 L29.0 246.8 L79.0 246.0 L209.0 246.0 L256.0 245.0 L304.0 246.0 L675.0 246.0 L738.0 247.8 L964.0 248.0 L1000.0 248.8 L1064.0 248.0 L1094.0 248.0 L1264.0 248.4 L1334.0 247.0 L1384.0 246.8 L2645.0 246.8 L2645.0 361.8 L2.0 361.8 Z" fill="rgba(169,181,167,0.02)" stroke="none"/><path d="M2.0 245.8 L29.0 246.8 L79.0 246.0 L209.0 246.0 L256.0 245.0 L304.0 246.0 L675.0 246.0 L738.0 247.8 L964.0 248.0 L1000.0 248.8 L1064.0 248.0 L1094.0 248.0 L1264.0 248.4 L1334.0 247.0 L1384.0 246.8 L2645.0 246.8" fill="none" stroke="#c1cdb7" stroke-width="2.25" stroke-linejoin="round"/><path d="M2.0 245.8 L29.0 246.8 L79.0 246.0 L209.0 246.0 L256.0 245.0 L304.0 246.0 L675.0 246.0 L738.0 247.8 L964.0 248.0 L1000.0 248.8 L1064.0 248.0 L1094.0 248.0 L1264.0 248.4 L1334.0 247.0 L1384.0 246.8 L2645.0 246.8" fill="none" stroke="#cf9bf0" stroke-width="2.25" stroke-dasharray="10 10" stroke-dashoffset="11" stroke-linejoin="round"/></svg>
<span id="t67" class="t s ax" style="left:252.01px;top:469.25px;font-size:25.5px;line-height:26px;letter-spacing:-1.050px;color:#ccccdc;transform:scaleX(0.9987);transform-origin:1.94px 50%">12:10</span>
<span id="t68" class="t s ax" style="left:473.11px;top:469.25px;font-size:25.5px;line-height:26px;letter-spacing:-1.049px;color:#ccccdc">12:15</span>
<span id="t69" class="t s ax" style="left:691.83px;top:469.25px;font-size:25.5px;line-height:26px;letter-spacing:0.119px;color:#ccccdc">12:20</span>
<span id="t70" class="t s ax" style="left:912.93px;top:469.25px;font-size:25.5px;line-height:26px;letter-spacing:0.138px;color:#ccccdc">12:25</span>
<span id="t71" class="t s ax" style="left:1134.03px;top:469.25px;font-size:25.5px;line-height:26px;letter-spacing:0.119px;color:#ccccdc">12:30</span>
<span id="t72" class="t s ax" style="left:1355.13px;top:469.25px;font-size:25.5px;line-height:26px;letter-spacing:0.138px;color:#ccccdc">12:35</span>
<span id="t73" class="t s ax" style="left:1576.23px;top:469.25px;font-size:25.5px;line-height:26px;letter-spacing:0.119px;color:#ccccdc">12:40</span>
<span id="t74" class="t s ax" style="left:1797.33px;top:469.25px;font-size:25.5px;line-height:26px;letter-spacing:0.138px;color:#ccccdc">12:45</span>
<span id="t75" class="t s ax" style="left:2018.43px;top:469.25px;font-size:25.5px;line-height:26px;letter-spacing:0.119px;color:#ccccdc">12:50</span>
<span id="t76" class="t s ax" style="left:2239.53px;top:469.25px;font-size:25.5px;line-height:26px;letter-spacing:0.138px;color:#ccccdc">12:55</span>
<span id="t77" class="t s ax" style="left:2460.63px;top:469.25px;font-size:25.5px;line-height:26px;letter-spacing:0.119px;color:#ccccdc">13:00</span>
<span id="t78" class="t s ax" style="left:2681.73px;top:469.25px;font-size:25.5px;line-height:26px;letter-spacing:0.138px;color:#ccccdc">13:05</span>
<div class="legend" style="left:2788.00px;top:80.00px;width:584.00px;height:150px">
<span id="t79" class="t m s" style="left:59.20px;top:10.60px;font-size:25px;line-height:25px;letter-spacing:0.574px;color:#6e9fff">Name</span>
<span id="t80" class="t m s" style="left:231.45px;top:10.60px;font-size:25px;line-height:25px;letter-spacing:0.962px;color:#6e9fff">Mean</span>
<span id="t81" class="t m s" style="left:372.45px;top:10.60px;font-size:25px;line-height:25px;letter-spacing:0.544px;color:#6e9fff">Max</span>
<span id="t82" class="t m s" style="left:497.45px;top:10.60px;font-size:25px;line-height:25px;letter-spacing:1.003px;color:#6e9fff">Last *</span>
<div class="lline" style="top:46.0px"></div>
<div class="lline" style="top:93.5px"></div>
<div class="lline" style="top:141.0px"></div>
<div class="lmark" style="left:15.75px;top:67.00px;background:#a9b5a7"></div>
<span id="t83" class="t s" style="left:60.99px;top:58.00px;font-size:25.5px;line-height:26px;letter-spacing:0.878px;color:#ccccdc">win-test</span>
<span id="t84" class="t s" style="left:231.23px;top:58.00px;font-size:25.5px;line-height:26px;letter-spacing:-1.050px;color:#ccccdc;transform:scaleX(0.9566);transform-origin:0.97px 50%">32.1%</span>
<span id="t85" class="t s" style="left:351.13px;top:58.00px;font-size:25.5px;line-height:26px;letter-spacing:-0.456px;color:#ccccdc">32.5%</span>
<span id="t86" class="t s" style="left:496.98px;top:58.00px;font-size:25.5px;line-height:26px;letter-spacing:-0.518px;color:#ccccdc">32.0%</span>
<div class="lmark" style="left:15.75px;top:114.00px;background:#ca95e5"></div>
<span id="t87" class="t s" style="left:58.86px;top:105.50px;font-size:25.5px;line-height:26px;letter-spacing:0.520px;color:#ccccdc">Mean</span>
<span id="t88" class="t s" style="left:231.23px;top:105.50px;font-size:25.5px;line-height:26px;letter-spacing:-1.050px;color:#ccccdc;transform:scaleX(0.9566);transform-origin:0.97px 50%">32.1%</span>
<span id="t89" class="t s" style="left:351.13px;top:105.50px;font-size:25.5px;line-height:26px;letter-spacing:-0.456px;color:#ccccdc">32.5%</span>
<span id="t90" class="t s" style="left:496.98px;top:105.50px;font-size:25.5px;line-height:26px;letter-spacing:-0.518px;color:#ccccdc">32.0%</span>
</div>
</section>
<section class="panel" id="p4" style="left:20px;top:1542px;width:1688px;height:516px"><h2 id="t91" class="t m" style="left:16.09px;top:17.50px;font-size:29.4px;line-height:29px;letter-spacing:0.025px;color:#ccccdc">Disk IO</h2>
<span id="t92" class="t s ax" style="left:24.66px;top:81.15px;font-size:25.5px;line-height:26px;letter-spacing:-1.050px;color:#ccccdc;transform:scaleX(0.9977);transform-origin:1.94px 50%">100.0%</span>
<span id="t93" class="t s ax" style="left:36.49px;top:152.65px;font-size:25.5px;line-height:26px;letter-spacing:-0.771px;color:#ccccdc">80.0%</span>
<span id="t94" class="t s ax" style="left:36.31px;top:224.15px;font-size:25.5px;line-height:26px;letter-spacing:-0.725px;color:#ccccdc">60.0%</span>
<span id="t95" class="t s ax" style="left:37.01px;top:295.65px;font-size:25.5px;line-height:26px;letter-spacing:-0.902px;color:#ccccdc">40.0%</span>
<span id="t96" class="t s ax" style="left:36.32px;top:367.15px;font-size:25.5px;line-height:26px;letter-spacing:-0.728px;color:#ccccdc">20.0%</span>
<svg class="ic plot" style="left:114.00px;top:92.00px" width="918.0" height="376.0" viewBox="0 0 918.0 376.0"><g stroke="rgba(226,232,240,0.042)" stroke-width="2" fill="none"><path d="M2.0 4.00 H914.0"/><path d="M2.0 76.00 H914.0"/><path d="M2.0 147.00 H914.0"/><path d="M2.0 219.00 H914.0"/><path d="M2.0 290.00 H914.0"/><path d="M2.0 362.00 H914.0"/></g><g stroke="rgba(226,232,240,0.068)" stroke-width="1" fill="none" shape-rendering="crispEdges"><path d="M59.5 4.2 V370.2"/><path d="M211.5 4.2 V370.2"/><path d="M363.5 4.2 V370.2"/><path d="M515.5 4.2 V370.2"/><path d="M667.5 4.2 V370.2"/><path d="M819.5 4.2 V370.2"/></g><path d="M2.0 361.6 L910.0 361.6" fill="none" stroke="#3d71d9" stroke-width="2.25" stroke-linejoin="round"/><path d="M2.0 361.6 L910.0 361.6" fill="none" stroke="#dca4ec" stroke-width="2.25" stroke-dasharray="10 10" stroke-dashoffset="9" stroke-linejoin="round"/></svg>
<div class="legend" style="left:1045.00px;top:80.00px;width:623.00px;height:150px">
<span id="t97" class="t m s" style="left:59.20px;top:10.60px;font-size:25px;line-height:25px;letter-spacing:0.574px;color:#6e9fff">Name</span>
<span id="t98" class="t m s" style="left:270.45px;top:10.60px;font-size:25px;line-height:25px;letter-spacing:0.962px;color:#6e9fff">Mean</span>
<span id="t99" class="t m s" style="left:411.45px;top:10.60px;font-size:25px;line-height:25px;letter-spacing:0.544px;color:#6e9fff">Max</span>
<span id="t100" class="t m s" style="left:536.45px;top:10.60px;font-size:25px;line-height:25px;letter-spacing:1.003px;color:#6e9fff">Last *</span>
<div class="lline" style="top:46.0px"></div>
<div class="lline" style="top:93.5px"></div>
<div class="lline" style="top:141.0px"></div>
<div class="lmark" style="left:15.75px;top:67.00px;background:#3d71d9"></div>
<span id="t101" class="t s" style="left:60.99px;top:58.00px;font-size:25.5px;line-height:26px;letter-spacing:0.733px;color:#ccccdc">win-test: C:</span>
<span id="t102" class="t s" style="left:284.95px;top:58.00px;font-size:25.5px;line-height:26px;letter-spacing:-1.050px;color:#ccccdc;transform:scaleX(0.9158);transform-origin:1.00px 50%">0.1%</span>
<span id="t103" class="t s" style="left:404.70px;top:58.00px;font-size:25.5px;line-height:26px;letter-spacing:-0.739px;color:#ccccdc">0.2%</span>
<span id="t104" class="t s" style="left:555.70px;top:58.00px;font-size:25.5px;line-height:26px;letter-spacing:-1.050px;color:#ccccdc;transform:scaleX(0.9158);transform-origin:1.00px 50%">0.1%</span>
<div class="lmark" style="left:15.75px;top:114.00px;background:#ca95e5"></div>
<span id="t105" class="t s" style="left:58.86px;top:105.50px;font-size:25.5px;line-height:26px;letter-spacing:0.520px;color:#ccccdc">Mean</span>
<span id="t106" class="t s" style="left:284.95px;top:105.50px;font-size:25.5px;line-height:26px;letter-spacing:-1.050px;color:#ccccdc;transform:scaleX(0.9158);transform-origin:1.00px 50%">0.1%</span>
<span id="t107" class="t s" style="left:404.70px;top:105.50px;font-size:25.5px;line-height:26px;letter-spacing:-0.739px;color:#ccccdc">0.2%</span>
<span id="t108" class="t s" style="left:555.70px;top:105.50px;font-size:25.5px;line-height:26px;letter-spacing:-1.050px;color:#ccccdc;transform:scaleX(0.9158);transform-origin:1.00px 50%">0.1%</span>
</div>
</section>
<section class="panel" id="p5" style="left:1724px;top:1542px;width:1688px;height:516px"><h2 id="t109" class="t m" style="left:15.09px;top:17.50px;font-size:29.4px;line-height:29px;letter-spacing:0.510px;color:#ccccdc">Disk space usage</h2>
<span id="t110" class="t s ax" style="left:24.66px;top:81.15px;font-size:25.5px;line-height:26px;letter-spacing:-1.050px;color:#ccccdc;transform:scaleX(0.9977);transform-origin:1.94px 50%">100.0%</span>
<span id="t111" class="t s ax" style="left:36.49px;top:152.65px;font-size:25.5px;line-height:26px;letter-spacing:-0.771px;color:#ccccdc">80.0%</span>
<span id="t112" class="t s ax" style="left:36.31px;top:224.15px;font-size:25.5px;line-height:26px;letter-spacing:-0.725px;color:#ccccdc">60.0%</span>
<span id="t113" class="t s ax" style="left:37.01px;top:295.65px;font-size:25.5px;line-height:26px;letter-spacing:-0.902px;color:#ccccdc">40.0%</span>
<span id="t114" class="t s ax" style="left:36.32px;top:367.15px;font-size:25.5px;line-height:26px;letter-spacing:-0.728px;color:#ccccdc">20.0%</span>
<svg class="ic plot" style="left:114.00px;top:92.00px" width="919.0" height="376.0" viewBox="0 0 919.0 376.0"><g stroke="rgba(226,232,240,0.042)" stroke-width="2" fill="none"><path d="M2.0 4.00 H914.7"/><path d="M2.0 76.00 H914.7"/><path d="M2.0 147.00 H914.7"/><path d="M2.0 219.00 H914.7"/><path d="M2.0 290.00 H914.7"/><path d="M2.0 362.00 H914.7"/></g><g stroke="rgba(226,232,240,0.068)" stroke-width="1" fill="none" shape-rendering="crispEdges"><path d="M59.5 4.2 V370.2"/><path d="M211.5 4.2 V370.2"/><path d="M363.5 4.2 V370.2"/><path d="M515.5 4.2 V370.2"/><path d="M666.5 4.2 V370.2"/><path d="M818.5 4.2 V370.2"/></g><path d="M2.0 226.6 L910.0 226.6 L910.0 361.8 L2.0 361.8 Z" fill="rgba(197,203,154,0.02)" stroke="none"/><path d="M2.0 226.6 L910.0 226.6" fill="none" stroke="#c9d09e" stroke-width="2.25" stroke-linejoin="round"/><path d="M2.0 226.6 L910.0 226.6" fill="none" stroke="#cf9bf0" stroke-width="2.25" stroke-dasharray="10 10" stroke-dashoffset="11" stroke-linejoin="round"/></svg>
<div class="legend" style="left:1045.00px;top:80.00px;width:623.00px;height:150px">
<span id="t115" class="t m s" style="left:59.20px;top:10.60px;font-size:25px;line-height:25px;letter-spacing:0.574px;color:#6e9fff">Name</span>
<span id="t116" class="t m s" style="left:270.45px;top:10.60px;font-size:25px;line-height:25px;letter-spacing:0.962px;color:#6e9fff">Mean</span>
<span id="t117" class="t m s" style="left:411.45px;top:10.60px;font-size:25px;line-height:25px;letter-spacing:0.544px;color:#6e9fff">Max</span>
<span id="t118" class="t m s" style="left:536.45px;top:10.60px;font-size:25px;line-height:25px;letter-spacing:1.003px;color:#6e9fff">Last *</span>
<div class="lline" style="top:46.0px"></div>
<div class="lline" style="top:93.5px"></div>
<div class="lline" style="top:141.0px"></div>
<div class="lmark" style="left:15.75px;top:67.00px;background:#b7ba9c"></div>
<span id="t119" class="t s" style="left:60.99px;top:58.00px;font-size:25.5px;line-height:26px;letter-spacing:0.733px;color:#ccccdc">win-test: C:</span>
<span id="t120" class="t s" style="left:267.98px;top:58.00px;font-size:25.5px;line-height:26px;letter-spacing:-1.050px;color:#ccccdc;transform:scaleX(0.9906);transform-origin:0.97px 50%">37.6%</span>
<span id="t121" class="t s" style="left:393.13px;top:58.00px;font-size:25.5px;line-height:26px;letter-spacing:-1.050px;color:#ccccdc;transform:scaleX(0.9906);transform-origin:0.97px 50%">37.6%</span>
<span id="t122" class="t s" style="left:538.73px;top:58.00px;font-size:25.5px;line-height:26px;letter-spacing:-1.050px;color:#ccccdc;transform:scaleX(0.9906);transform-origin:0.97px 50%">37.6%</span>
<div class="lmark" style="left:15.75px;top:114.00px;background:#ca95e5"></div>
<span id="t123" class="t s" style="left:58.86px;top:105.50px;font-size:25.5px;line-height:26px;letter-spacing:0.520px;color:#ccccdc">Mean</span>
<span id="t124" class="t s" style="left:267.98px;top:105.50px;font-size:25.5px;line-height:26px;letter-spacing:-1.050px;color:#ccccdc;transform:scaleX(0.9906);transform-origin:0.97px 50%">37.6%</span>
<span id="t125" class="t s" style="left:393.13px;top:105.50px;font-size:25.5px;line-height:26px;letter-spacing:-1.050px;color:#ccccdc;transform:scaleX(0.9906);transform-origin:0.97px 50%">37.6%</span>
<span id="t126" class="t s" style="left:538.73px;top:105.50px;font-size:25.5px;line-height:26px;letter-spacing:-1.050px;color:#ccccdc;transform:scaleX(0.9906);transform-origin:0.97px 50%">37.6%</span>
</div>
</section>
</main>
</body></html>
